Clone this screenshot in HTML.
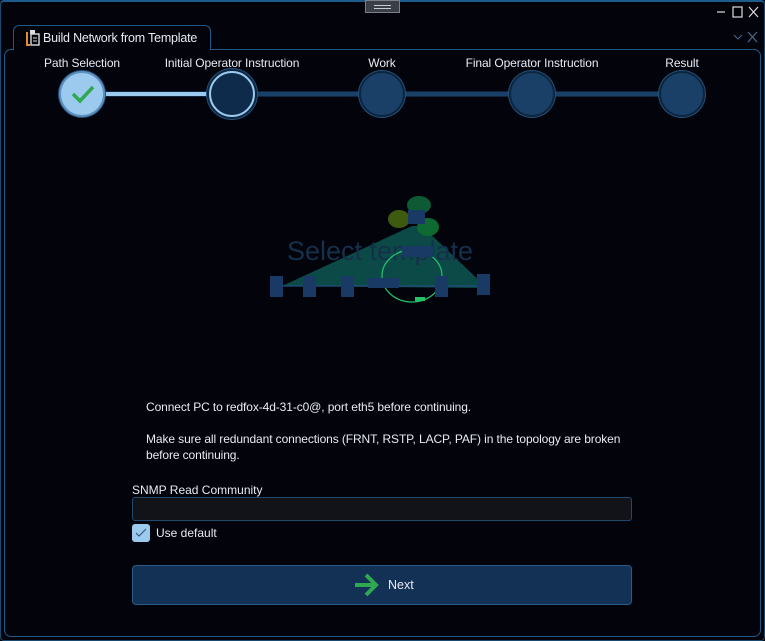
<!DOCTYPE html>
<html><head><meta charset="utf-8"><style>
*{margin:0;padding:0;box-sizing:border-box}
body{width:765px;height:641px;background:#02030b;font-family:"Liberation Sans",sans-serif;color:#e8ecf2;position:relative;overflow:hidden}
.abs{position:absolute}
.frame{left:0;top:0;width:765px;height:641px;border:1px solid #1a4a70;border-top:2px solid #1d5c8a;border-radius:4px}
.grip{left:365px;top:0;width:35px;height:13px;background:#3a3e46;border:1px solid #7a7f88}
.grip:before,.grip:after{content:"";position:absolute;left:8px;width:17px;height:1px;background:#c8ccd2}
.grip:before{top:4px}.grip:after{top:7px}
.tab{left:13px;top:25px;width:198px;height:25px;border:1px solid #1f5a86;border-bottom:none;border-radius:6px 6px 0 0;background:#02030b;z-index:2}
.tabt{left:43px;top:31px;font-size:12.5px;z-index:3;letter-spacing:-0.2px}
.panel{left:4px;top:49px;width:757px;height:588px;border:1px solid #1f5a86;border-radius:7px}
.lbl{font-size:12px;top:56px;transform:translateX(-50%);white-space:nowrap;letter-spacing:-0.1px}
.line{height:6px;top:91px}
.c{width:46px;height:46px;border-radius:50%;top:71px;background:#1a4068;border:2px solid #0d2640;box-shadow:0 0 0 1px #24507a}
.txt{font-size:12px;left:146px;line-height:16px;letter-spacing:-0.1px}
</style></head><body>
<div class="abs frame"></div>
<div class="abs grip"></div>
<svg class="abs" style="left:715px;top:5px" width="48" height="14"><path d="M2 7h8" stroke="#ddd" stroke-width="1.2"/><rect x="18" y="2" width="9" height="10" fill="none" stroke="#ddd" stroke-width="1.2"/><path d="M34 2l9 10M43 2l-9 10" stroke="#ddd" stroke-width="1.2"/></svg>
<svg class="abs" style="left:732px;top:31px" width="30" height="12"><path d="M2 4l4 4 4-4" stroke="#4a6a8a" fill="none"/><path d="M16 1l9 10M25 1l-9 10" stroke="#4a6a8a" stroke-width="1.2"/></svg>
<div class="abs panel"></div>
<div class="abs tab"></div>
<svg class="abs" style="left:24px;top:29px;z-index:3" width="16" height="18"><path d="M3 3v13h3" stroke="#e8892a" stroke-width="2" fill="none"/><rect x="6" y="1" width="5" height="4" fill="#ddd"/><rect x="7" y="5" width="8" height="11" fill="none" stroke="#ddd" stroke-width="1.4"/><path d="M9 9h4M9 12h4" stroke="#ddd"/></svg>
<div class="abs tabt">Build Network from Template</div>

<div class="abs lbl" style="left:82px">Path Selection</div>
<div class="abs lbl" style="left:232px">Initial Operator Instruction</div>
<div class="abs lbl" style="left:382px">Work</div>
<div class="abs lbl" style="left:532px">Final Operator Instruction</div>
<div class="abs lbl" style="left:682px">Result</div>

<div class="abs line" style="left:82px;width:600px;background:#1a4068;border-top:1px solid #0d2640;border-bottom:1px solid #0d2640"></div>
<div class="abs line" style="left:95px;width:130px;background:#9ccaee;border-top:1px solid #0d2640;border-bottom:1px solid #0d2640"></div>
<div class="abs c" style="left:59px;background:#9ccaee;border-color:#5d8fbd"></div>
<svg class="abs" style="left:70px;top:84px" width="26" height="20"><path d="M3 10l7 7L23 3" stroke="#2fa84f" stroke-width="3.5" fill="none"/></svg>
<div class="abs c" style="left:209px;background:#0f2b4c;border:2px solid #9ccaee;box-shadow:0 0 0 2px #0d2640,0 0 0 3px #24507a"></div>
<div class="abs c" style="left:359px"></div>
<div class="abs c" style="left:509px"></div>
<div class="abs c" style="left:659px"></div>

<svg class="abs" style="left:262px;top:192px" width="236" height="112" viewBox="0 0 236 112">
<polygon points="20,94 150,34 160,34 225,96" fill="#0c4a48"/>
<text x="118" y="68" font-size="27" fill="#15304a" text-anchor="middle" font-family="Liberation Sans">Select template</text>
<ellipse cx="157" cy="13" rx="12" ry="9" fill="#0d5a34"/>
<ellipse cx="137" cy="27" rx="11" ry="9" fill="#3d5a10"/>
<ellipse cx="166" cy="35" rx="11" ry="9" fill="#0f6a32"/>
<rect x="146" y="18" width="17" height="14" fill="#1a3a66"/>
<ellipse cx="150" cy="84" rx="30" ry="26" fill="none" stroke="#22c36a" stroke-width="1.2"/>
<path d="M12 94h210" stroke="#1f4f80" stroke-width="1.2"/>
<rect x="140" y="54" width="31" height="11" fill="#1a3a66"/>
<rect x="106" y="86" width="31" height="10" fill="#1a3a66"/>
<rect x="8" y="84" width="13" height="21" fill="#1a3a66"/>
<rect x="41" y="84" width="13" height="21" fill="#1a3a66"/>
<rect x="79" y="84" width="13" height="21" fill="#1a3a66"/>
<rect x="173" y="84" width="13" height="21" fill="#1a3a66"/>
<rect x="215" y="82" width="13" height="21" fill="#1a3a66"/>
<rect x="153" y="105" width="10" height="4" fill="#22c36a"/>
</svg>

<div class="abs txt" style="top:399px">Connect PC to redfox-4d-31-c0@, port eth5 before continuing.</div>
<div class="abs txt" style="top:431px">Make sure all redundant connections (FRNT, RSTP, LACP, PAF) in the topology are broken<br>before continuing.</div>
<div class="abs" style="left:132px;top:483px;font-size:12px">SNMP Read Community</div>
<div class="abs" style="left:132px;top:497px;width:500px;height:24px;background:#111318;border:1px solid #1f4a70;border-radius:3px"></div>
<div class="abs" style="left:132px;top:524px;width:18px;height:18px;background:#9ccaee;border-radius:3px"></div>
<svg class="abs" style="left:135px;top:528px" width="12" height="10"><path d="M1 5l3 3 7-7" stroke="#3a5a7a" stroke-width="1.2" fill="none"/></svg>
<div class="abs" style="left:156px;top:526px;font-size:12px">Use default</div>
<div class="abs" style="left:132px;top:565px;width:500px;height:40px;background:#123154;border:1px solid #2a5a88;border-radius:4px"></div>
<svg class="abs" style="left:354px;top:573px" width="26" height="24"><path d="M1 12h20M12 2l10 10-10 10" stroke="#2fa84f" stroke-width="4" fill="none"/></svg>
<div class="abs" style="left:388px;top:578px;font-size:12.5px">Next</div>
</body></html>
